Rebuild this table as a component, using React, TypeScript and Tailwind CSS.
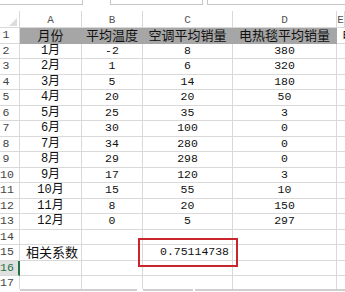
import React from 'react';

const rows: [string, string, string, string][] = [
  ['1', '-2', '8', '380'],
  ['2', '1', '6', '320'],
  ['3', '5', '14', '180'],
  ['4', '20', '20', '50'],
  ['5', '25', '35', '3'],
  ['6', '30', '100', '0'],
  ['7', '34', '280', '0'],
  ['8', '29', '298', '0'],
  ['9', '17', '120', '3'],
  ['10', '15', '55', '10'],
  ['11', '8', '20', '150'],
  ['12', '0', '5', '297'],
];

const cjk = { fontFamily: '"Noto Sans CJK SC", sans-serif' };
const mono = { fontFamily: '"Liberation Mono", "Noto Sans CJK SC", monospace' };

const gridCols = 'grid grid-cols-[20px_62px_61px_90px_104px_1fr]';
const cell =
  'border-r border-b border-[#d9d9d9] flex items-center justify-center whitespace-nowrap leading-[14px]';

const Num = ({ v }: { v: string }) => (
  <span className="text-[11.5px] text-[#111]" style={mono}>{v}</span>
);

const Cjk = ({ v }: { v: string }) => (
  <span className="text-[13px] leading-[14px] text-[#111]" style={cjk}>{v}</span>
);

const RowHead = ({ n, active }: { n: number; active?: boolean }) => (
  <div
    className={`border-b border-r flex items-center leading-[14px] ${
      active
        ? 'bg-[#e1e1e1] border-r-2 border-r-[#217346] border-b-[#d9d9d9] text-[#217346]'
        : 'border-[#d9d9d9] text-[#444]'
    }`}
  >
    <span className="w-[12px] text-center text-[11.5px]" style={mono}>{n}</span>
  </div>
);

export default function App() {
  return (
    <div className="relative w-[345px] h-[292px] overflow-hidden bg-white flex flex-col">
      {/* formula bar edges */}
      <div className="flex h-[5px] shrink-0">
        <div className="w-[83px] border-r border-b border-[#c6c6c6]" />
        <div className="w-[27px]" />
        <div className="w-[93px] border-x border-b border-[#c6c6c6]" />
        <div className="w-[4px]" />
        <div className="flex-1 border-l border-b border-[#c6c6c6]" />
      </div>
      <div className="h-[6px] shrink-0" />

      {/* column headers */}
      <div className={`${gridCols} h-[17px] shrink-0`}>
        <div className="relative border-r border-b border-[#d9d9d9]">
          <svg className="absolute right-[2px] bottom-[1px]" width="8" height="8" viewBox="0 0 8 8">
            <polygon points="8,0 8,8 0,8" fill="#dcdcdc" />
          </svg>
        </div>
        {['A', 'B', 'C', 'D', 'E'].map((c) => (
          <div key={c} className={`${cell} pt-[1px] text-[11px] text-[#555]`} style={mono}>
            {c}
          </div>
        ))}
      </div>

      {/* sheet body */}
      <div className={`${gridCols} auto-rows-[15.5px]`}>
        <RowHead n={1} />
        {['月份', '平均温度', '空调平均销量', '电热毯平均销量'].map((h) => (
          <div key={h} className={`${cell} bg-[#a6a6a6] border-r-[#a6a6a6] border-b-[#a6a6a6]`}>
            <Cjk v={h} />
          </div>
        ))}
        <div className={`${cell} justify-start pl-[5px]`}>
          <Cjk v="电" />
        </div>

        {rows.map((r, i) => (
          <React.Fragment key={r[0]}>
            <RowHead n={i + 2} />
            <div className={cell}>
              <span className="text-[12px] text-[#111]" style={mono}>{`${r[0]}月`}</span>
            </div>
            <div className={cell}>
              <Num v={r[1]} />
            </div>
            <div className={cell}>
              <Num v={r[2]} />
            </div>
            <div className={cell}>
              <Num v={r[3]} />
            </div>
            <div className={cell} />
          </React.Fragment>
        ))}

        {[14, 15, 16, 17].map((n) => (
          <React.Fragment key={n}>
            <RowHead n={n} active={n === 16} />
            <div className={`${cell} justify-start pl-[6px]`}>
              {n === 15 && <Cjk v="相关系数" />}
            </div>
            <div className={cell} />
            <div className={`${cell} justify-end pr-[3px]`}>
              {n === 15 && <Num v="0.75114738" />}
            </div>
            <div className={cell} />
            <div className={cell} />
          </React.Fragment>
        ))}
      </div>

      {/* sheet tab strip edge, drawn over the last row */}
      <div className="absolute left-0 right-0 bottom-0 flex h-[3px] bg-white">
        <div className="w-[20px]" />
        <div className="w-[117px] border-t-2 border-[#cfcfcf]" />
        <div className="w-[6px]" />
        <div className="w-[50px] border-t-2 border-[#cfcfcf]" />
        <div className="w-[2px]" />
        <div className="flex-1 border-t-2 border-[#cfcfcf]" />
      </div>

      {/* annotation box */}
      <div className="absolute left-[138px] top-[238px] w-[100px] h-[29px] border-2 border-[#c8262c]" />
    </div>
  );
}
